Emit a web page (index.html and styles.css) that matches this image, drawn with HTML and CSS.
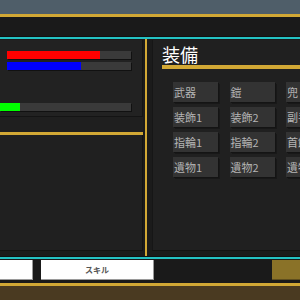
FILE: index.html
```html
<!DOCTYPE html>
<html lang="ja">
<head>
<meta charset="utf-8">
<link rel="stylesheet" href="styles.css">
</head>
<body>
<div class="screen">
  <div class="sky"></div>
  <div class="rule-gold"></div>
  <div class="header"></div>
  <div class="rule-cyan"></div>
  <div class="main">
    <div class="left">
      <div class="stats">
        <div class="bar bar-hp"><div class="fill red" style="width:75%"></div></div>
        <div class="bar bar-mp"><div class="fill blue" style="width:60%"></div></div>
        <div class="bar bar-xp"><div class="fill green" style="width:15%"></div></div>
      </div>
      <div class="left-gap"></div>
      <div class="rule-gold thin"></div>
      <div class="log"></div>
    </div>
    <div class="divider"></div>
    <div class="right">
      <div class="equip">
        <h1 class="title">装備</h1>
        <div class="title-rule"></div>
        <div class="slots">
          <div class="slot">武器</div>
          <div class="slot">鎧</div>
          <div class="slot">兜</div>
          <div class="slot">装飾1</div>
          <div class="slot">装飾2</div>
          <div class="slot">副手</div>
          <div class="slot">指輪1</div>
          <div class="slot">指輪2</div>
          <div class="slot">首飾</div>
          <div class="slot">遺物1</div>
          <div class="slot">遺物2</div>
          <div class="slot">遺物3</div>
        </div>
      </div>
    </div>
  </div>
  <div class="rule-cyan"></div>
  <div class="footer">
    <button class="tab tab-first"></button>
    <button class="tab tab-skill">スキル</button>
    <div class="spacer"></div>
    <button class="tab-gold"></button>
  </div>
  <div class="rule-gold"></div>
  <div class="ground"></div>
</div>
</body>
</html>
```
FILE: styles.css
```css
html, body {
  margin: 0;
  padding: 0;
  background: #1c1c1c;
}
.screen {
  width: 300px;
  height: 300px;
  overflow: hidden;
  display: flex;
  flex-direction: column;
  font-family: "Noto Sans CJK JP", "Noto Sans", sans-serif;
}
.sky {
  height: 14px;
  background: #4f5e69;
  flex: none;
}
.rule-gold {
  height: 3px;
  background: #d2a835;
  flex: none;
}
.header {
  height: 19px;
  background: #1a1a1a;
  flex: none;
}
.rule-cyan {
  height: 2px;
  background: #24c2c4;
  border-top: 1px solid #0e1414;
  flex: none;
}
.main {
  height: 217px;
  display: flex;
  background: #1b1b1b;
  flex: none;
}
.left {
  width: 143px;
  flex: none;
  display: flex;
  flex-direction: column;
  padding-top: 1px;
}
.stats {
  height: 76px;
  background: #222222;
  border-right: 1px solid #141414;
  border-bottom: 1px solid #141414;
  position: relative;
  flex: none;
}
.bar {
  position: absolute;
  height: 8px;
  background: #3a3a3a;
  box-shadow: 1px 1px 0 #111;
}
.bar-hp { left: 7px; top: 11px; width: 124px; }
.bar-mp { left: 7px; top: 22px; width: 124px; }
.bar-xp { left: 0; top: 63px; width: 131px; }
.fill { height: 100%; }
.red { background: #ff0000; }
.blue { background: #0000ff; }
.green { background: #00ff00; }
.left-gap {
  height: 15px;
  background: #1f1f1f;
  flex: none;
}
.rule-gold.thin {
  height: 3px;
}
.log {
  height: 115px;
  background: #202020;
  border-bottom: 1px solid #131313;
  border-right: 1px solid #131313;
  flex: none;
}
.divider {
  width: 2px;
  margin-left: 2px;
  background: #d2a835;
  height: 217px;
  flex: none;
}
.right {
  flex: 1;
  min-width: 0;
  overflow: hidden;
  padding: 1px 0 5px 5px;
  display: flex;
}
.equip {
  flex: 1;
  background: #202020;
  border-left: 1px solid #161616;
  border-bottom: 1px solid #131313;
  padding-left: 9px;
}
.title {
  margin: 5px 0 0 0;
  height: 18px;
  font-size: 18px;
  line-height: 18px;
  font-weight: normal;
  color: #ffffff;
}
.title-rule {
  height: 4px;
  background: #d2a835;
  margin-top: 2px;
}
.slots {
  margin: 13px 0 0 11px;
  display: grid;
  grid-template-columns: repeat(3, 45px);
  grid-auto-rows: 20px;
  column-gap: 11.5px;
  row-gap: 5px;
}
.slot {
  background: #333333;
  box-shadow: 1px 1px 0 #141414, 2px 2px 0 #181818;
  color: #b5b5b5;
  font-size: 11px;
  line-height: 20px;
  padding-left: 1px;
  white-space: nowrap;
  overflow: hidden;
}
.footer {
  height: 24px;
  background: #1a1a1a;
  display: flex;
  align-items: flex-start;
  padding-top: 1px;
  box-sizing: border-box;
  flex: none;
}
.tab {
  height: 20px;
  background: #ffffff;
  border: none;
  border-right: 1px solid #9a9a9a;
  border-bottom: 1px solid #9a9a9a;
  margin: 0;
  padding: 0;
  font-family: "Noto Sans CJK JP", sans-serif;
  font-size: 8px;
  font-weight: bold;
  color: #555555;
  flex: none;
}
.tab-first { width: 33px; }
.tab-skill { width: 113px; margin-left: 8px; }
.spacer { flex: 1; }
.tab-gold {
  width: 28px;
  height: 20px;
  background: #8a7228;
  border: none;
  border-bottom: 1px solid #5e4e1e;
  margin: 0;
  flex: none;
}
.ground {
  flex: 1;
  background: #4a3a21;
}
```
